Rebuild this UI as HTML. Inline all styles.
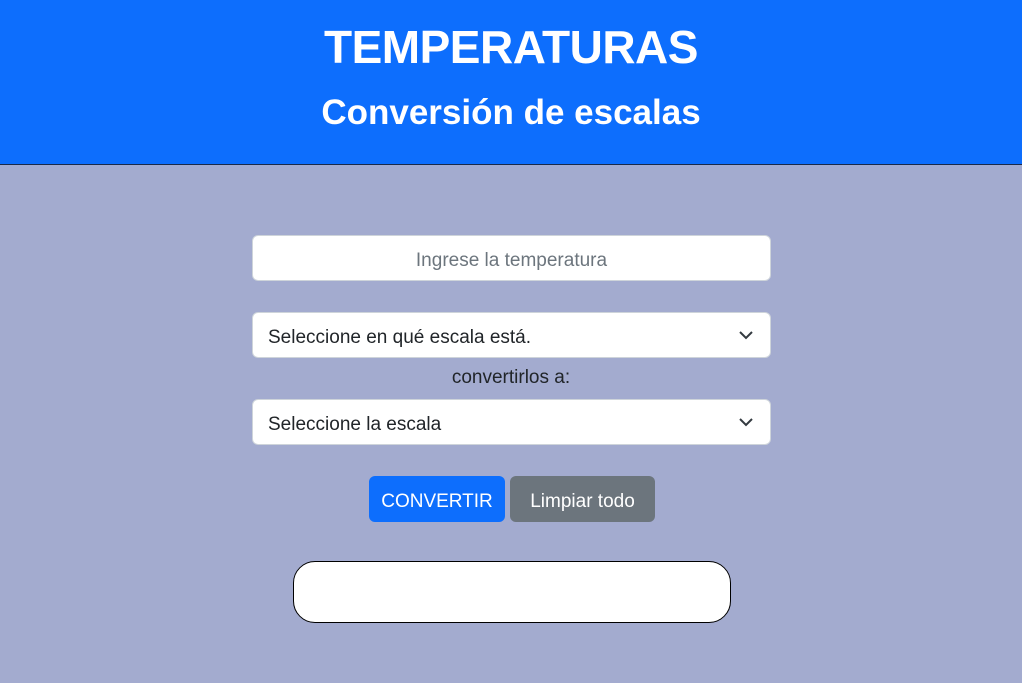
<!DOCTYPE html>
<html><head><style>
body{margin:0;width:1022px;height:683px;background:#a3abcf;font-family:"Liberation Sans",sans-serif;overflow:hidden;position:relative}
.hd{position:absolute;left:0;top:0;width:1022px;height:164px;background:#0d6efd;border-bottom:1px solid #1a2a4a;color:#fff;text-align:center}
.h1{position:absolute;width:100%;top:18px;font-size:46px;font-weight:bold;line-height:58px;letter-spacing:-0.5px}
.h2{position:absolute;width:100%;top:91px;font-size:35px;font-weight:bold;line-height:44px}
.f{position:absolute;left:252px;width:517px;height:44px;background:#fff;border:1px solid #ced4da;border-radius:6px;font-size:19px;line-height:50px;color:#212529}
.f span{position:absolute;left:15px}
.f svg{position:absolute;right:17px;top:17px}
.lbl{position:absolute;top:367px;width:1022px;text-align:center;font-size:19px;color:#212529}
.b{position:absolute;top:476px;height:46px;border-radius:6px;color:#fff;font-size:19px;line-height:52px;text-align:center}
.res{position:absolute;left:293px;top:561px;width:436px;height:60px;background:#fff;border:1px solid #000;border-radius:22px}
</style></head><body>
<div class="hd"><div class="h1">TEMPERATURAS</div><div class="h2">Conversión de escalas</div></div>
<div class="f" style="top:235px;text-align:center;color:#6c757d">Ingrese la temperatura</div>
<div class="f" style="top:312px"><span>Seleccione en qué escala está.</span><svg width="14" height="10" viewBox="0 0 14 10"><path d="M1 2l6 6 6-6" fill="none" stroke="#343a40" stroke-width="2"/></svg></div>
<div class="lbl">convertirlos a:</div>
<div class="f" style="top:399px"><span>Seleccione la escala</span><svg width="14" height="10" viewBox="0 0 14 10"><path d="M1 2l6 6 6-6" fill="none" stroke="#343a40" stroke-width="2"/></svg></div>
<div class="b" style="left:369px;width:136px;background:#0d6efd">CONVERTIR</div>
<div class="b" style="left:510px;width:145px;background:#6c757d">Limpiar todo</div>
<div class="res"></div>
</body></html>
